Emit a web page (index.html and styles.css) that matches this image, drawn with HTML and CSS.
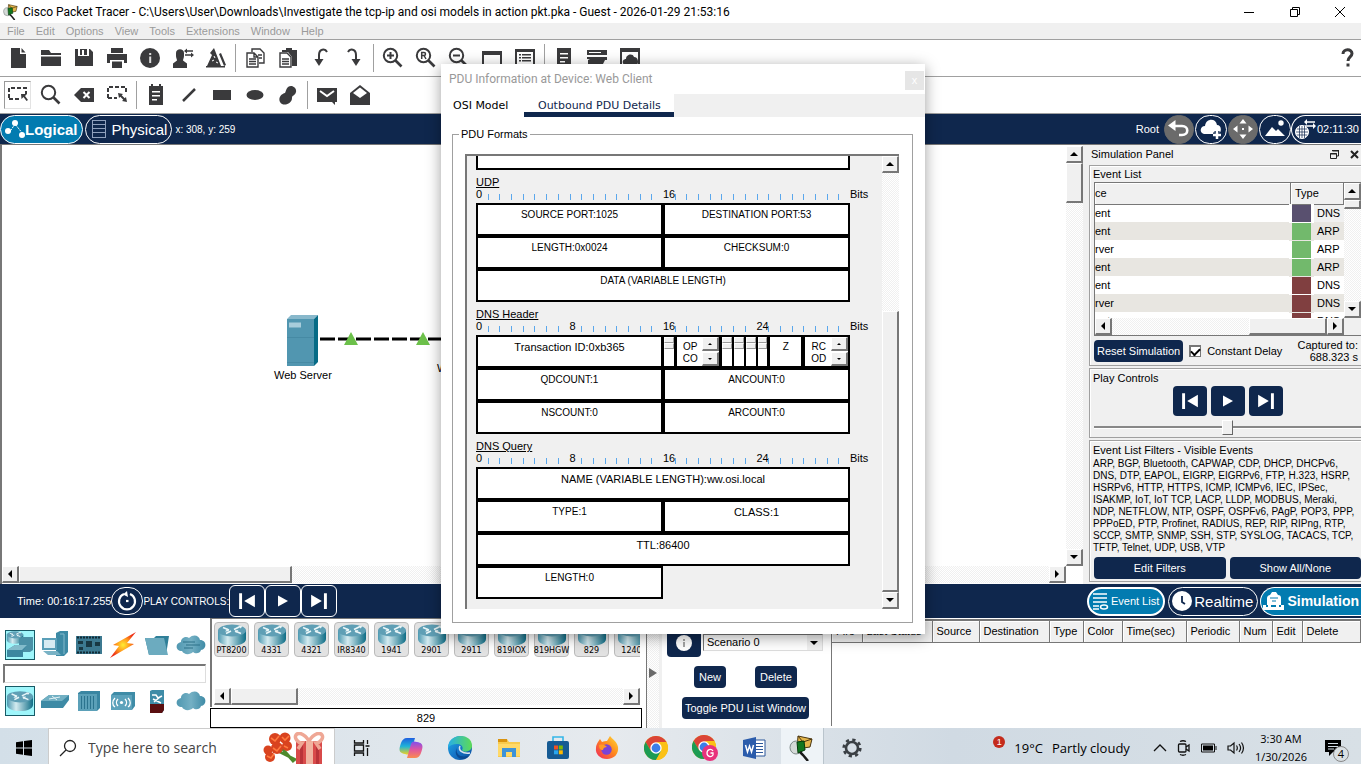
FILE: index.html
```html
<!DOCTYPE html>
<html lang="en">
<head>
<meta charset="utf-8">
<title>Cisco Packet Tracer</title>
<meta name="viewport" content="width=device-width, initial-scale=1">
<link rel="stylesheet" href="styles.css">
</head>
<body>
<svg class="defs" width="0" height="0" aria-hidden="true">
  <defs>
    <linearGradient id="teal" x1="0" x2="1" y1="0" y2="0"><stop offset="0" stop-color="#4b98b0"/><stop offset=".35" stop-color="#d4ebf0"/><stop offset="1" stop-color="#0f6d86"/></linearGradient>
    <linearGradient id="mist" x1="0" x2="1" y1="0" y2="0"><stop offset="0" stop-color="#4f97b0"/><stop offset=".5" stop-color="#74b0c4"/><stop offset="1" stop-color="#3f8ba6"/></linearGradient>
    <linearGradient id="cp1" x1="0" y1="0" x2="0" y2="1"><stop offset="0" stop-color="#1f5fe0"/><stop offset=".5" stop-color="#1fb3d8"/><stop offset="1" stop-color="#f2d21f"/></linearGradient>
    <linearGradient id="cp2" x1="0" y1="0" x2="0" y2="1"><stop offset="0" stop-color="#7d4ff0"/><stop offset=".5" stop-color="#e0569e"/><stop offset="1" stop-color="#fb8b4f"/></linearGradient>
    <linearGradient id="edge" x1="0" y1="0" x2="1" y2="1"><stop offset="0" stop-color="#1fb0e6"/><stop offset=".5" stop-color="#1676c9"/><stop offset="1" stop-color="#0c4f9c"/></linearGradient>
    <linearGradient id="edge2" x1="0" y1="0" x2="1" y2="0"><stop offset="0" stop-color="#27aee8"/><stop offset="1" stop-color="#5ddb55"/></linearGradient>
    <linearGradient id="fox" x1="1" y1="0" x2="0" y2="1"><stop offset="0" stop-color="#ffdf3b"/><stop offset=".45" stop-color="#ff8a1c"/><stop offset="1" stop-color="#f0235f"/></linearGradient>
    <radialGradient id="bolt"><stop offset="0" stop-color="#ffee33"/><stop offset=".5" stop-color="#ff9a1c"/><stop offset="1" stop-color="#ee3016"/></radialGradient>
    <symbol id="router" viewBox="0 0 30 22">
      <path d="M1 6v9c0 9 28 9 28 0V6z" fill="url(#teal)"/>
      <ellipse cx="15" cy="6.500" rx="14" ry="6" fill="#5f9fb5"/>
      <path d="M6 3.500l6 2.500M9 9.500l5-2.500M24 9.500l-6-2.500M17 5.500l6-3" stroke="#eaf6f8" stroke-width="1.600" fill="none"/>
      <path d="M12 7.200l-4 .2 2.800-3zM18 6.400l3.500-.3-2.500 3zM22 1.800l3.500.4-2 2.400z" fill="#eaf6f8"/>
    </symbol>
    <symbol id="cloud" viewBox="0 0 30 22"><path d="M6 17c-7 0-7-8-1-9 0-5 6-6 8-4 4-4 10-3 11 2 7 0 7 9 1 10-1 4-6 4-8 2-3 3-9 3-11-1z" fill="url(#mist)"/></symbol>
    <symbol id="prev" viewBox="0 0 16 16"><path d="M1 1h2.600v14H1zM15 2.500v11L5.500 8z" fill="#fff"/></symbol>
    <symbol id="play" viewBox="0 0 16 16"><path d="M3 2.500v11L13 8z" fill="#fff"/></symbol>
    <symbol id="next" viewBox="0 0 16 16"><path d="M12.400 1H15v14h-2.600zM1 2.500v11L10.500 8z" fill="#fff"/></symbol>
    <symbol id="lens" viewBox="0 0 22 22"><circle cx="8.500" cy="8.500" r="6.700" fill="none" stroke="#3a3a3c" stroke-width="2"/><path d="M13.500 13.500l6 6" stroke="#3a3a3c" stroke-width="2.600"/></symbol>
    <symbol id="ptlogo" viewBox="0 0 26 26">
      <path d="M9 1l14 3-2 8-13 2z" fill="#e3b54a" stroke="#4a3510"/><path d="M9 1l5 6 9-3" fill="none" stroke="#4a3510"/>
      <ellipse cx="7" cy="12.500" rx="6" ry="6.500" fill="#d5dad8" stroke="#7f8a88"/>
      <path d="M8 7l7-1 1 9-7 3z" fill="#12761f" stroke="#053b0a"/><path d="M11 17l3 3 5 6" stroke="#1a1a1a" stroke-width="2.500" fill="none"/>
    </symbol>
    <symbol id="chrome" viewBox="0 0 24 24"><circle cx="12" cy="12" r="12" fill="#e8b90f"/><path d="M1.600 6A12 12 0 0 1 22.400 6L12 12z" fill="#db4437"/><path d="M1.600 6h20.800L12 6.500 7 15z" fill="#db4437"/><path d="M1.600 6A12 12 0 0 0 12 24l5-9-5 2-5-2z" fill="#1c9b53"/><path d="M22.400 6A12 12 0 0 1 12 24l5.200-9L13 6z" fill="#fbc116"/><circle cx="12" cy="12" r="5.700" fill="#fff"/><circle cx="12" cy="12" r="4.400" fill="#3b7de8"/></symbol>
  </defs>
</svg>

<div class="app">
  <header class="titlebar">
    <svg class="logo" width="16" height="16"><use href="#ptlogo"/></svg>
    <h1>Cisco Packet Tracer - C:\Users\User\Downloads\Investigate the tcp-ip and osi models in action pkt.pka - Guest - 2026-01-29 21:53:16</h1>
    <div class="winbtns">
      <button aria-label="Minimize"><svg width="10" height="10"><path d="M0 5.500h10" stroke="#000"/></svg></button>
      <button aria-label="Restore"><svg width="10" height="10" fill="none" stroke="#000"><path d="M.5 2.500h7v7h-7zM2.500 2.500v-2h7v7h-2"/></svg></button>
      <button aria-label="Close"><svg width="10" height="10"><path d="M0 0l10 10M10 0L0 10" stroke="#000"/></svg></button>
    </div>
  </header>

  <nav class="menubar">
    <button>File</button><button>Edit</button><button>Options</button><button>View</button><button>Tools</button><button>Extensions</button><button>Window</button><button>Help</button>
  </nav>

  <div class="toolbar">
    <button aria-label="New"><svg width="22" height="22"><path d="M4 1h9v6h6v14H4zM14.500 1l4 4.500h-4z"/></svg></button>
    <button aria-label="Open"><svg width="22" height="22"><path d="M1 3h8l2 3h10v2H1zM1 9.500h20V19H1z"/></svg></button>
    <button aria-label="Save"><svg width="22" height="22"><path d="M2 2h3v7h11V2h1l3 3v14H2zM7 2h7v6h-3V3H9v5H7z"/></svg></button>
    <button aria-label="Print"><svg width="22" height="22"><path d="M5 1h12v5H5zM1 7h20v9h-3v-3H4v3H1zM6 14.500h10V21H6z"/></svg></button>
    <button aria-label="Activity information"><svg width="22" height="22"><circle cx="11" cy="11" r="10"/><path d="M10.200 6h2v2h-2zM10.200 9.500h2V16h-2z" fill="#ddd"/></svg></button>
    <button aria-label="User profile"><svg width="22" height="22"><path d="M4 6c0-5 8-5 8 0v3c0 2-1 3-1 4.500l4 3V21H1v-4.500l4-3C5 12 4 11 4 9z"/><path d="M13 4h8M13 8h8" stroke="#3a3a3c" stroke-width="1.500"/><path d="M15 1.500v5L12 4zM19 5.500v5l3-2.500z"/></svg></button>
    <button aria-label="Activity wizard"><svg width="22" height="22"><path d="M9 1l7 18H2L7 8 5 6zM14 7l2-1 5 12-2 1zM1 19h19v1.500H1z"/><path d="M9 9l1 2M7 14l2-1M11 15l2 1" stroke="#fff"/></svg></button>
    <span class="sep"></span>
    <button aria-label="Copy"><svg width="22" height="22" fill="none" stroke="#3a3a3c" stroke-width="1.400"><path d="M8 5V2h8l4 4v10h-5M3 6h7l4 4v10H3zM10 6v4h4M5 12h7M5 14.500h7M5 17h7M14 8h4M15 11h3"/></svg></button>
    <button aria-label="Paste"><svg width="22" height="22"><path d="M5 3h4V1h6v2h5v16h-5v-9l-4-5H5z"/><path d="M3 6h7l4 4v10H3zM5 12h7M5 14.500h7M5 17h7" fill="#fff" stroke="#3a3a3c" stroke-width="1.400"/></svg></button>
    <button aria-label="Undo"><svg width="22" height="22"><path d="M17 5c-2-4-8-3-8 3v7" fill="none" stroke="#3a3a3c" stroke-width="2"/><path d="M4.500 12h9L9 19z"/></svg></button>
    <button aria-label="Redo"><svg width="22" height="22"><path d="M5 5c2-4 8-3 8 3v7" fill="none" stroke="#3a3a3c" stroke-width="2"/><path d="M8.500 12h9L13 19z"/></svg></button>
    <span class="sep"></span>
    <button aria-label="Zoom in"><svg width="22" height="22"><use href="#lens"/><path d="M5 8.500h7M8.500 5v7" stroke="#3a3a3c" stroke-width="2"/></svg></button>
    <button aria-label="Zoom reset"><svg width="22" height="22"><use href="#lens"/><path d="M6.700 12V5.500H9c2 0 2 3 0 3H7M9 8.500l2 3.500" fill="none" stroke="#3a3a3c" stroke-width="1.500"/></svg></button>
    <button aria-label="Zoom out"><svg width="22" height="22"><use href="#lens"/><path d="M5 8.500h7" stroke="#3a3a3c" stroke-width="2"/></svg></button>
    <button aria-label="Drawing palette"><svg width="22" height="22"><path d="M1 4h20v16H1zM3 8v10h16V8z" fill-rule="evenodd"/></svg></button>
    <button aria-label="Custom devices"><svg width="22" height="22"><path d="M1 2h20v17H1zM3 5v12h16V5zM5 7h2v1.500H5zM8 7h9v1.500H8zM5 10h2v1.500H5zM8 10h9v1.500H8zM5 13h2v1.500H5zM8 13h9v1.500H8z" fill-rule="evenodd"/></svg></button>
    <span class="sep"></span>
    <button aria-label="Cluster"><svg width="22" height="22"><path d="M4 1h14v20H4zM7 6h8v1.500H7zM7 10h8v1.500H7zM7 14h5v1.500H7z" fill-rule="evenodd"/></svg></button>
    <button aria-label="Servers"><svg width="22" height="22"><path d="M1 3h20v5H1zM3 5v1h12V5zM1 10h20v3h-2l-2 4H2v-4l2-1H1z" fill-rule="evenodd"/></svg></button>
    <button aria-label="Cloud view"><svg width="22" height="22"><path d="M1 1h20v20H1zM3 5v13h16V5z" fill-rule="evenodd"/><path d="M5 18c-3-4 0-6 2-6 0-5 7-6 8-2 4 0 5 5 3 8z"/></svg></button>
    <button class="help" aria-label="Help"><svg width="22" height="22"><path d="M7 7c0-5.500 9-5.500 9-.5 0 3.500-4 3.500-4 7.500" fill="none" stroke="#3a3a3c" stroke-width="3"/><path d="M10.500 16.500h3v3h-3z"/></svg></button>
  </div>

  <div class="toolbar">
    <button class="pressed" aria-label="Select"><svg width="22" height="22"><path d="M2 14V4h17v6M2 15h11" fill="none" stroke="#3a3a3c" stroke-width="2" stroke-dasharray="4 2"/><path d="M14 10h6l-2 2 3 4-1.500 1-3-4-2 2z"/></svg></button>
    <button aria-label="Inspect"><svg width="22" height="22"><use href="#lens"/></svg></button>
    <button aria-label="Delete"><svg width="22" height="22"><path d="M1 11l7-7h13v14H8z"/><path d="M10.500 8l6 6M16.500 8l-6 6" stroke="#fff" stroke-width="2"/></svg></button>
    <button aria-label="Resize"><svg width="22" height="22"><path d="M2 14V3h18v7M2 14h9" fill="none" stroke="#3a3a3c" stroke-width="2" stroke-dasharray="4 2"/><path d="M12 9l5 1-1.300 1.300 3 3L20 13l1 5-5-1 1.300-1.300-3-3L13 14z"/></svg></button>
    <span class="sep"></span>
    <button aria-label="Place note"><svg width="22" height="22"><path d="M4 2h2V0h2v2h6V0h2v2h2v19H4zM7 7h8v1.500H7zM7 11h8v1.500H7zM7 15h5v1.500H7z" fill-rule="evenodd"/></svg></button>
    <button aria-label="Draw line"><svg width="22" height="22"><path d="M5 17L17 5" stroke="#3a3a3c" stroke-width="2.500"/></svg></button>
    <button aria-label="Draw rectangle"><svg width="22" height="22"><path d="M2 6h18v10H2z"/></svg></button>
    <button aria-label="Draw ellipse"><svg width="22" height="22"><ellipse cx="11" cy="11" rx="8.500" ry="5"/></svg></button>
    <button aria-label="Draw freeform"><svg width="22" height="22"><path d="M11 3c4-3 9 1 8 5-1 4-4 3-4 6 0 6-9 9-12 4-2-4 1-8 5-9 1-2 1-4 3-6z"/></svg></button>
    <span class="sep"></span>
    <button aria-label="Add simple PDU"><svg width="22" height="22"><path d="M1 4h20v14h-2v3l-3-3H1z"/><path d="M4 7l7 5 7-5" fill="none" stroke="#fff" stroke-width="2"/></svg></button>
    <button aria-label="Add complex PDU"><svg width="22" height="22"><path d="M1 9l10-8 10 8v12H1z"/><path d="M4 9l7-5.500L18 9l-7 5z" fill="#fff"/></svg></button>
  </div>

  <div class="modebar">
    <button class="pill on"><svg width="21" height="20"><path d="M5 14l6-9 8 10" stroke="#fff" stroke-dasharray="2 1" fill="none"/><circle cx="4" cy="12" r="3" fill="#fff"/><circle cx="11" cy="4" r="3" fill="#fff"/><circle cx="18" cy="16" r="3" fill="#fff"/></svg>Logical</button>
    <button class="pill"><svg width="17" height="20" fill="none" stroke="#8fa0bd"><path d="M2.500 1v18M15.500 1v18M2 1.500h14M2 5.500h14M2 9.500h14M2 13.500h14M2 18.500h14"/></svg>Physical</button>
    <span class="coords">x: 308, y: 259</span>
    <span class="root">Root</span>
    <button class="round gray" aria-label="Back"><svg width="24" height="24"><path d="M6 9h9c7 0 7 9 0 9h-3" fill="none" stroke="#fff" stroke-width="2.600"/><path d="M8.500 3v11L1 8.500z" fill="#fff"/></svg></button>
    <button class="round" aria-label="New cluster"><svg width="24" height="24" fill="#fff"><path d="M5 17c-5-1-4-8 1-8 1-8 11-8 12-1 5 0 5 8 1 9z"/><path d="M14 18h8M18 14v8" stroke="#0f274d" stroke-width="5"/><path d="M14 18h8M18 14v8" stroke="#fff" stroke-width="2.500"/></svg></button>
    <button class="round gray" aria-label="Move object"><svg width="24" height="24" fill="#fff"><path d="M12 2l3.500 4.500h-7zM12 22l3.500-4.500h-7zM2 12l4.500-3.500v7zM22 12l-4.500-3.500v7zM11 11h2v2h-2z"/></svg></button>
    <button class="round" aria-label="Set background"><svg width="24" height="24" fill="#fff"><path d="M2 19l7-9 4 4 2-2 7 7z"/><circle cx="18" cy="6" r="2.700"/></svg></button>
    <button class="pill env" aria-label="Environment, 02:11:30"><svg width="23" height="24" fill="none" stroke="#fff"><circle cx="9" cy="15" r="6.500" fill="#fff"/><path d="M3 15h12M9 9v12M4 12h10M4 18h10M6.500 9v12M11.500 9v12" stroke="#0f274d" stroke-width=".7"/><path d="M12 5h10M12 9h9" stroke-width="1.600"/><path d="M14 2l-3 3 3 3zM20 6l3 3-3 3z" fill="#fff" stroke="none"/></svg>02:11:30</button>
  </div>

  <main class="workspace">
    <section class="canvaswrap" aria-label="Logical workspace">
      <div class="canvas">
        <svg class="link" width="200" height="20"><path d="M0 9h200" stroke="#000" stroke-width="3" stroke-dasharray="15 3"/><path d="M31 2l7 13H24zM103 2l7 13H96z" fill="#6cc04a"/></svg>
        <figure class="node server"><svg width="32" height="52"><path d="M0 4l4-4h27l-4 4z" fill="#88b8cb"/><path d="M27 4l4-4v47l-4 4z" fill="#066b86"/><path d="M0 4h27v47H0z" fill="#5196b0"/><path d="M2 7.500h12v5H2z" fill="#a8cddb"/><path d="M0 22.500h27M0 47.500h27" stroke="#468aa4"/></svg><figcaption>Web Server</figcaption></figure>
        <figure class="node client"><figcaption>Web Client</figcaption></figure>
      </div>
      <div class="vscroll"><button class="sb up" aria-label="Scroll up"></button><i class="thumb t40"></i><span class="grow"></span><button class="sb down" aria-label="Scroll down"></button></div>
      <div class="hscroll"><button class="sb left" aria-label="Scroll left"></button><i class="thumb t273"></i><span class="grow"></span><button class="sb right" aria-label="Scroll right"></button></div>
    </section>

    <aside class="sim">
      <div class="simhead"><h2>Simulation Panel</h2>
        <button aria-label="Float"><svg width="9" height="9" fill="none" stroke="#222"><path d="M2.500 1h6v5h-2M2 .5h7M.5 3.500h6v5h-6zM0 4h7"/></svg></button>
        <button aria-label="Close panel"><svg width="9" height="9"><path d="M1 1l7 7M8 1L1 8" stroke="#222" stroke-width="2"/></svg></button>
      </div>
      <section class="group evgroup">
        <h3>Event List</h3>
        <div class="events">
          <div class="evscroll">
            <table>
              <colgroup><col><col class="w22"><col class="w31"></colgroup>
              <thead><tr><th>ce</th><th colspan="2">Type</th></tr></thead>
              <tbody>
                <tr><td>ent</td><td class="c p"></td><td class="hl">DNS</td></tr>
                <tr><td>ent</td><td class="c g"></td><td>ARP</td></tr>
                <tr><td>rver</td><td class="c g"></td><td>ARP</td></tr>
                <tr><td>ent</td><td class="c g"></td><td>ARP</td></tr>
                <tr><td>ent</td><td class="c r"></td><td>DNS</td></tr>
                <tr><td>rver</td><td class="c r"></td><td>DNS</td></tr>
                <tr><td>ent</td><td class="c r"></td><td>DNS</td></tr>
              </tbody>
            </table>
          </div>
          <div class="vscroll"><button class="sb up" aria-label="Scroll up"></button><i class="thumb t9"></i><span class="grow"></span><button class="sb down" aria-label="Scroll down"></button></div>
          <div class="hscroll"><button class="sb left" aria-label="Scroll left"></button><span class="grow"></span><i class="thumb t78"></i><button class="sb right" aria-label="Scroll right"></button></div>
        </div>
        <div class="reset"><button class="btn tight">Reset Simulation</button><label><input type="checkbox" checked>Constant Delay</label><p>Captured to:<br>688.323 s</p></div>
      </section>
      <section class="group">
        <h3>Play Controls</h3>
        <div class="playrow">
          <button class="btn sq" aria-label="Step back"><svg width="18" height="18"><use href="#prev"/></svg></button>
          <button class="btn sq" aria-label="Play"><svg width="16" height="16"><use href="#play"/></svg></button>
          <button class="btn sq" aria-label="Step forward"><svg width="18" height="18"><use href="#next"/></svg></button>
        </div>
        <input class="slider" type="range" aria-label="Play speed" min="0" max="100" value="50">
      </section>
      <section class="group last">
        <h3>Event List Filters - Visible Events</h3>
        <p class="filters">ARP, BGP, Bluetooth, CAPWAP, CDP, DHCP, DHCPv6,<br>DNS, DTP, EAPOL, EIGRP, EIGRPv6, FTP, H.323, HSRP,<br>HSRPv6, HTTP, HTTPS, ICMP, ICMPv6, IEC, IPSec,<br>ISAKMP, IoT, IoT TCP, LACP, LLDP, MODBUS, Meraki,<br>NDP, NETFLOW, NTP, OSPF, OSPFv6, PAgP, POP3, PPP,<br>PPPoED, PTP, Profinet, RADIUS, REP, RIP, RIPng, RTP,<br>SCCP, SMTP, SNMP, SSH, STP, SYSLOG, TACACS, TCP,<br>TFTP, Telnet, UDP, USB, VTP</p>
        <div class="two"><button class="btn">Edit Filters</button><button class="btn">Show All/None</button></div>
      </section>
    </aside>
  </main>

  <div class="timebar">
    <span class="time">Time: 00:16:17.255</span>
    <button class="round cyc" aria-label="Power cycle devices"><svg width="22" height="22" fill="none" stroke="#fff" stroke-width="2.200"><path d="M8 4a8 8 0 1 0 6 0"/><path d="M11 1L7 4.500l5 2.500z" fill="#fff" stroke="none"/><path d="M10 11h2.500"/></svg></button>
    <span class="pclabel">PLAY CONTROLS:</span>
    <button class="pc" aria-label="Back"><svg width="18" height="18"><use href="#prev"/></svg></button>
    <button class="pc" aria-label="Play"><svg width="16" height="16"><use href="#play"/></svg></button>
    <button class="pc" aria-label="Forward"><svg width="18" height="18"><use href="#next"/></svg></button>
    <span class="grow"></span>
    <button class="pill on small"><svg width="17" height="18" stroke="#fff" fill="none" stroke-width="1.500"><path d="M1 2h14M1 6h14M1 10h14M1 14h6M1 17h6"/><ellipse cx="12" cy="15" rx="3.500" ry="2"/></svg>Event List</button>
    <button class="pill real"><svg width="22" height="22"><circle cx="11" cy="11" r="10" fill="#fff"/><path d="M11 6v6l3 2" stroke="#0f274d" stroke-width="1.800" fill="none"/></svg>Realtime</button>
    <button class="pill on simu"><svg width="22" height="20" fill="#fff"><path d="M4 14V7c0-2 2-3 3-3l2-3h4l2 3c2 0 3 1 3 3v7zM0 14h3v2h2v-2h3v2h5v-2h3v2h2v-2h3v5H0z"/><path d="M7 7h8M9 10h4" stroke="#027bb0"/></svg>Simulation</button>
  </div>

  <div class="bottom">
    <section class="kinds" aria-label="Device types">
      <div class="kindrow">
        <button class="sel" aria-label="Network devices"><svg width="30" height="30"><use href="#router" x="1" y="1" width="18" height="13"/><path d="M14 9l3-2h11v13l-3 2H14z" fill="#4a90a6"/><path d="M2 20l8-5h12l-4 6v6H2z" fill="#3c87a0"/><path d="M2 20l8-5h12l-5 5z" fill="#83bccb"/></svg></button>
        <button aria-label="End devices"><svg width="30" height="30"><path d="M16 3l4-2h8v21l-4 4h-8z" fill="#3d8aa5"/><path d="M20 4h4v20" stroke="#83b9cc" fill="none"/><path d="M2 8h15v12H2z" fill="#5a9fb8"/><path d="M4 10h11v8H4z" fill="#d7ebf2"/><path d="M3 21h14l4 4H8z" fill="#79b2c5"/></svg></button>
        <button aria-label="Components"><svg width="30" height="30"><path d="M2 6h26v18H2z" fill="#3c7990"/><path d="M3 7.500h24M3 22.500h24" stroke="#122b36" stroke-width="2" stroke-dasharray="2 1"/><path d="M12 11h6v6h-6zM4 11h5v3H4zM21 12h5v4h-5zM5 17h4v3H5z" fill="#183843"/></svg></button>
        <button aria-label="Connections"><svg width="30" height="30"><path d="M28 2L19 13l7 1L2 28l9-12-6-1z" fill="url(#bolt)"/></svg></button>
        <button aria-label="Miscellaneous"><svg width="30" height="30"><path d="M3 8h9l2-2h13l-3 19H7z" fill="#2f7f98"/><path d="M3 8h19l4 17H7z" fill="#6cabbf"/></svg></button>
        <button aria-label="Multiuser connection"><svg width="30" height="22"><use href="#cloud"/><path d="M7 8h12M10 11h14M8 14h9" stroke="#2c7088"/></svg></button>
      </div>
      <input class="find" type="text" aria-label="Search devices">
      <div class="kindrow">
        <button class="sel" aria-label="Routers"><svg width="28" height="22"><use href="#router"/></svg></button>
        <button aria-label="Switches"><svg width="30" height="20"><path d="M1 10l8-6h20v5l-6 8H1z" fill="#3d8aa5"/><path d="M1 10l8-6h20l-7 6z" fill="#72b0c3"/><path d="M9 8l11-2M12 5l5 4" stroke="#e2f1f5"/></svg></button>
        <button aria-label="Hubs"><svg width="24" height="22"><path d="M1 3l3-2h19v17l-3 3H1z" fill="#3a86a2"/><path d="M1 4h19v17H1z" fill="#5ba0b8"/><path d="M4.500 6v13M7.500 6v13M10.500 6v13M13.500 6v13M16.500 6v13" stroke="#2b738e"/></svg></button>
        <button aria-label="Wireless devices"><svg width="26" height="20"><path d="M1 4l3-3h21v14l-3 4H1z" fill="#3f8ca7"/><path d="M1 4h21v15H1z" fill="#5ca2bb"/><path d="M8 8c-2 2-2 5 0 7M5 7c-3 3-3 7 0 9M15 8c2 2 2 5 0 7M18 7c3 3 3 7 0 9" stroke="#fff" fill="none" stroke-width="1.300"/><circle cx="11.500" cy="11.500" r="1.600" fill="#fff"/></svg></button>
        <button aria-label="Security"><svg width="16" height="24"><path d="M1 2l2-1h12v20l-2 3H1z" fill="#3f8ca7"/><path d="M1 15h14v6l-2 3H1z" fill="#5a0f10"/><path d="M3 6h4l2 3 4-2M4 10l8 4M5 13l6-5" stroke="#fff" stroke-width="1.500" fill="none"/></svg></button>
        <button aria-label="WAN emulation"><svg width="30" height="22"><use href="#cloud"/></svg></button>
      </div>
    </section>
    <section class="models" aria-label="Device models">
      <div class="shelf">
        <div class="devs">
          <button><svg width="30" height="22"><use href="#router"/></svg>PT8200</button>
          <button><svg width="30" height="22"><use href="#router"/></svg>4331</button>
          <button><svg width="30" height="22"><use href="#router"/></svg>4321</button>
          <button><svg width="30" height="22"><use href="#router"/></svg>IR8340</button>
          <button><svg width="30" height="22"><use href="#router"/></svg>1941</button>
          <button><svg width="30" height="22"><use href="#router"/></svg>2901</button>
          <button><svg width="30" height="22"><use href="#router"/></svg>2911</button>
          <button><svg width="30" height="22"><use href="#router"/></svg>819IOX</button>
          <button><svg width="30" height="22"><use href="#router"/></svg>819HGW</button>
          <button><svg width="30" height="22"><use href="#router"/></svg>829</button>
          <button><svg width="30" height="22"><use href="#router"/></svg>1240</button>
        </div>
        <div class="hscroll"><button class="sb left" aria-label="Scroll left"></button><i class="thumb t67"></i><span class="grow"></span><button class="sb right" aria-label="Scroll right"></button></div>
      </div>
      <p class="picked">829</p>
    </section>
    <button class="sash" aria-label="Collapse"><svg width="9" height="10"><path d="M0 0l8 5-8 5z" fill="#6a6a6a"/></svg></button>
    <section class="scen">
      <div class="scenrow"><button class="btn info" aria-label="Scenario info"><svg width="18" height="18"><circle cx="9" cy="9" r="8" fill="#fff"/><path d="M9 5v2M9 8v5" stroke="#888" stroke-width="1.500"/></svg></button>
        <span class="combo"><select aria-label="Scenario"><option>Scenario 0</option></select></span></div>
      <div class="scenrow mid"><button class="btn">New</button><button class="btn">Delete</button></div>
      <div class="scenrow end"><button class="btn tight">Toggle PDU List Window</button></div>
    </section>
    <div class="pdus">
      <table><thead><tr><th class="w30">Fire</th><th class="w70">Last Status</th><th class="w47">Source</th><th class="w70">Destination</th><th class="w34">Type</th><th class="w39">Color</th><th class="w64">Time(sec)</th><th class="w53">Periodic</th><th class="w33">Num</th><th class="w30">Edit</th><th>Delete</th></tr></thead></table>
    </div>
  </div>

  <footer class="taskbar">
    <button class="start" aria-label="Start"><svg width="16" height="16"><path d="M0 2.200l7-1v6.300H0zM8 1l8-1v7.500H8zM0 8.500h7v6.300l-7-1zM8 8.500h8V16l-8-1z"/></svg></button>
    <label class="search"><svg width="18" height="18" fill="none" stroke="#222" stroke-width="1.300"><circle cx="11" cy="7" r="5.500"/><path d="M7 11l-6 6"/></svg>
      <input type="text" placeholder="Type here to search" aria-label="Type here to search">
      <svg class="gift" width="64" height="32"><path d="M18 14l14 16M14 18l20 10" stroke="#4d8a2c" stroke-width="3"/><g fill="#d9431f"><circle cx="13" cy="7" r="6"/><circle cx="23" cy="6" r="5.500"/><circle cx="25" cy="14" r="5"/><circle cx="15" cy="16" r="6"/><circle cx="6" cy="18" r="4.500"/><circle cx="8" cy="25" r="5"/></g><path d="M9 6l4 3 4-5M20 5l3 3 4-4M11 16l4 3 4-5M5 24l4 2 3-4M22 14l4 2" stroke="#ff7a3f" stroke-width="1.600" fill="none"/><path d="M34 9h26v23H34z" fill="#d84a4a"/><path d="M38 11h3v21h-3zM54 11h3v21h-3z" fill="#b93339"/><path d="M44 9h7v23h-7z" fill="#f0b3a0"/><path d="M47 9c-5-8-11-9-13-6s2 8 6 8l-4 6M47 9c5-8 11-9 13-6s-2 8-6 8l4 6" fill="none" stroke="#efa795" stroke-width="3.500"/></svg></label>
    <div class="apps">
      <button aria-label="Task view"><svg width="18" height="18" fill="none" stroke="#111" stroke-width="1.300"><path d="M1.500 1v3h9V1M1.500 17v-3h9v3M1.500 6h9v6h-9zM14.500 1v4M14.500 9v8M12.500 7h4"/></svg></button>
      <button aria-label="Copilot"><svg width="24" height="24"><path d="M8 2h8l-4 14c-1 3-3 3-6 2-7-1-6-5-4-11 1-3 3-5 6-5z" fill="url(#cp1)"/><path d="M16 22H8l4-14c1-3 3-3 6-2 7 1 6 5 4 11-1 3-3 5-6 5z" fill="url(#cp2)"/></svg></button>
      <button aria-label="Edge"><svg width="24" height="24"><circle cx="12" cy="12" r="12" fill="url(#edge)"/><path d="M0 12C0-3 24-4 24 10c0 6-9 7-10 4 2-3-1-6-5-6-4 0-7 1-9 4z" fill="url(#edge2)"/><path d="M9 12c-2 6 4 11 13 7l-3 3C11 26 5 18 9 12z" fill="#0b4b93"/><path d="M12 10c-2 4 2 8 10 7" stroke="#dce7ee" stroke-width="1.500" fill="none"/></svg></button>
      <button aria-label="File Explorer"><svg width="24" height="22"><path d="M1 2h9l2 3h11v15H1z" fill="#f7ca4d"/><path d="M1 2h9v3H1z" fill="#d9930f"/><path d="M1 7h22v12H1z" fill="#ffd968"/><path d="M5 20v-9h14v9h-4v-5H9v5z" fill="#3e93d8"/></svg></button>
      <button aria-label="Microsoft Store"><svg width="24" height="24"><path d="M7 6V1h10v5" fill="none" stroke="#35b6e8" stroke-width="1.600"/><rect x="1" y="5" width="22" height="18" rx="2" fill="#155a93"/><path d="M8 9.500h4v4H8z" fill="#f25022"/><path d="M12.800 9.500h4v4h-4z" fill="#7fba00"/><path d="M8 14.300h4v4H8z" fill="#29a6ee"/><path d="M12.800 14.300h4v4h-4z" fill="#ffb900"/></svg></button>
      <button aria-label="Firefox"><svg width="24" height="24"><path d="M3 6l2-3 2 3c2-1 4-1 5-1l3-5c2 3 7 5 8 11 1 7-4 12-11 12S0 18 1 12c0-3 1-4 2-6z" fill="url(#fox)"/><circle cx="11.500" cy="13.500" r="5.200" fill="#7a42d6"/><path d="M4 9c4-1 6 0 8 2-2 0-4 1-4 3-3 0-4-2-4-5z" fill="#ff9a26"/></svg></button>
      <button aria-label="Chrome"><svg width="24" height="24"><use href="#chrome"/></svg></button>
      <button aria-label="Chrome profile G"><svg width="26" height="26"><use href="#chrome" width="24" height="24"/><circle cx="18" cy="18" r="8" fill="#e8327c"/><path d="M21 16c-2-3-6-1.500-6 2s4 5 6 2v-2h-2.500" fill="none" stroke="#fff" stroke-width="1.300"/></svg></button>
      <button aria-label="Word"><svg width="24" height="22"><path d="M12 3h11v16H12z" fill="#fff" stroke="#2b579a"/><path d="M14 6.500h7M14 9.500h7M14 12.500h7M14 15.500h7" stroke="#2b579a"/><path d="M1 3l13-3v22L1 19z" fill="#2b5cab"/><path d="M3.500 8l2 7 2-6 2 6 2-7" stroke="#fff" stroke-width="1.500" fill="none"/></svg></button>
      <button class="active" aria-label="Cisco Packet Tracer"><svg width="26" height="26"><use href="#ptlogo"/></svg></button>
      <button aria-label="Settings"><svg width="20" height="20" fill="none" stroke="#3a3f44"><circle cx="10" cy="10" r="6" stroke-width="2.600"/><circle cx="10" cy="10" r="8.300" stroke-width="2.600" stroke-dasharray="3.260 3.260"/></svg></button>
    </div>
    <div class="tray">
      <button class="weather"><b class="badge">1</b><span>19°C</span><span>Partly cloudy</span></button>
      <button aria-label="Show hidden icons"><svg width="14" height="8"><path d="M1 7l6-6 6 6" fill="none" stroke="#111" stroke-width="1.300"/></svg></button>
      <button aria-label="Meet now"><svg width="14" height="16" fill="none" stroke="#111" stroke-width="1.300"><rect x="1.500" y="4" width="7.500" height="8" rx="1"/><path d="M9 7l3-2v6L9 9M3 1.500c2-1 4-1 6 0M3 14.500c2 1 4 1 6 0"/></svg></button>
      <button aria-label="Battery"><svg width="16" height="10"><path d="M.5 1h13v8H.5zM15 3v4" fill="none" stroke="#111"/><path d="M2 2.500h10v5H2z"/></svg></button>
      <button aria-label="Volume"><svg width="18" height="14" fill="none" stroke="#111" stroke-width="1.200"><path d="M1 5h2.500L7 2v10L3.500 9H1zM9.500 4.500c1 1.500 1 3.500 0 5M12 3c2 2.500 2 5.500 0 8M14.500 1.500c2.500 3.500 2.500 7.500 0 11"/></svg></button>
      <time>3:30 AM<br>1/30/2026</time>
      <button class="note" aria-label="4 notifications"><svg width="16" height="16"><path d="M0 0h16v12h-8l-4 4v-4H0z"/><path d="M3 3.500h10M3 6.500h10M3 9h6" stroke="#d3dce4"/></svg><b>4</b></button>
    </div>
  </footer>
</div>

<div class="dialog" role="dialog" aria-label="PDU Information at Device: Web Client">
  <div class="dtitle"><h2>PDU Information at Device: Web Client</h2><button aria-label="Close">x</button></div>
  <div class="tabs"><button>OSI Model</button><button class="cur">Outbound PDU Details</button></div>
  <fieldset>
    <legend>PDU Formats</legend>
    <div class="pduview">
      <div class="fields">
        <div class="cut"></div>
        <h3>UDP</h3>
        <div class="ruler"><b>0</b><i></i><i></i><i></i><i></i><i></i><i></i><i></i><i></i><i></i><i></i><i></i><i></i><i></i><i></i><i></i><b>16</b><i></i><i></i><i></i><i></i><i></i><i></i><i></i><i></i><i></i><i></i><i></i><i></i><i></i><i></i><i></i><b>Bits</b></div>
        <div class="bits"><div class="s16">SOURCE PORT:1025</div><div class="s16">DESTINATION PORT:53</div><div class="s16">LENGTH:0x0024</div><div class="s16">CHECKSUM:0</div><div class="s32">DATA (VARIABLE LENGTH)</div></div>
        <h3>DNS Header</h3>
        <div class="ruler"><b>0</b><i></i><i></i><i></i><i></i><i></i><i></i><i></i><b>8</b><i></i><i></i><i></i><i></i><i></i><i></i><i></i><b>16</b><i></i><i></i><i></i><i></i><i></i><i></i><i></i><b>24</b><i></i><i></i><i></i><i></i><i></i><i></i><i></i><b>Bits</b></div>
        <div class="bits"><div class="s16 mixed">Transaction ID:0xb365</div><div class="s1"><i></i><i></i></div><div class="s4"><span>OP<br>CO</span><span class="mini"><button class="sb up" aria-label="Up"></button><button class="sb down" aria-label="Down"></button></span></div><div class="s1"><i></i><i></i></div><div class="s1"><i></i><i></i></div><div class="s1"><i></i><i></i></div><div class="s1"><i></i><i></i></div><div class="s3">Z</div><div class="s4"><span>RC<br>OD</span><span class="mini"><button class="sb up" aria-label="Up"></button><button class="sb down" aria-label="Down"></button></span></div><div class="s16">QDCOUNT:1</div><div class="s16">ANCOUNT:0</div><div class="s16">NSCOUNT:0</div><div class="s16">ARCOUNT:0</div></div>
        <h3>DNS Query</h3>
        <div class="ruler"><b>0</b><i></i><i></i><i></i><i></i><i></i><i></i><i></i><b>8</b><i></i><i></i><i></i><i></i><i></i><i></i><i></i><b>16</b><i></i><i></i><i></i><i></i><i></i><i></i><i></i><b>24</b><i></i><i></i><i></i><i></i><i></i><i></i><i></i><b>Bits</b></div>
        <div class="bits"><div class="s32 mixed">NAME (VARIABLE LENGTH):ww.osi.local</div><div class="s16">TYPE:1</div><div class="s16 mixed">CLASS:1</div><div class="s32 mixed">TTL:86400</div><div class="s16">LENGTH:0</div></div>
      </div>
      <div class="vscroll"><button class="sb up" aria-label="Scroll up"></button><span class="grow"></span><i class="thumb t281"></i><button class="sb down" aria-label="Scroll down"></button></div>
    </div>
  </fieldset>
</div>
</body>
</html>
```

FILE: styles.css
```css
:root {
  --navy: #0f274d;
  --blue: #027bb0;
  --face: #f0f0f0;
  --ink: #3a3a3c;
  --ui: "Liberation Sans", Arial, sans-serif;
  --segoe: "Open Sans", "Noto Sans", sans-serif;
  --caption: Roboto, "Open Sans", sans-serif;
}
* { box-sizing: border-box; }
body { margin: 0; font: 11px/13px var(--ui); color: #000; background: #fff; overflow: hidden; }
h1, h2, h3, p, figure { margin: 0; font: inherit; }
button, input, select { font: inherit; color: inherit; }
button { border: 0; padding: 0; background: none; display: flex; align-items: center; justify-content: center; flex: none; white-space: nowrap; }
svg { display: block; flex: none; }
table { border-collapse: collapse; border-spacing: 0; }
.defs { position: absolute; }
.grow { flex: 1; }
.app { display: flex; flex-direction: column; min-height: 100vh; }

/* window chrome */
.titlebar { display: flex; align-items: center; height: 23px; padding-left: 3px; }
.titlebar h1 { font: 12px/16px var(--caption); margin-left: 4px; white-space: nowrap; }
.winbtns { display: flex; margin-left: auto; }
.winbtns button { width: 46px; height: 20px; }
.winbtns button:last-child { width: 43px; }
.menubar { display: flex; gap: 11px; height: 17px; padding-left: 7px; background: var(--face); border-bottom: 1px solid #a0a0a0; color: #9b9b9b; }
.toolbar { display: flex; align-items: center; height: 37px; padding-left: 1px; border-bottom: 1px solid #a0a0a0; }
.toolbar button { width: 33px; height: 28px; }
.toolbar svg:not([fill]) { fill: var(--ink); }
.toolbar .pressed { width: 27px; margin: 0 3px; border: 1px solid #999; border-right-color: #e3e3e3; border-bottom-color: #e3e3e3; }
.toolbar .help { margin-left: auto; width: 29px; }
.sep { width: 6px; height: 28px; background: linear-gradient(#a0a0a0, #a0a0a0) 3px 0 / 1px 100% no-repeat; }

.modebar, .timebar { display: flex; align-items: center; background: var(--navy); color: #fff; }
.modebar { height: 30px; }
.pill { height: 29px; border: 1px solid #fff; border-radius: 15px; padding: 0 5px; gap: 3px; font-size: 15px; background: var(--navy); color: #fff; }
.pill.on { background: var(--blue); font-weight: bold; }
.modebar .pill:first-child { padding: 0 4px 0 3px; margin-right: 2px; gap: 0; }
.modebar .pill:nth-child(2) { gap: 5px; padding: 0 4px; }
.coords { margin-left: 3px; font-size: 10px; }
.root { margin-left: auto; margin-right: 4px; }
.round { width: 32px; height: 29px; border: 1px solid #fff; border-radius: 15px; }
.round.gray { background: #6b6b6b; border-color: #6b6b6b; width: 30px; margin: 0 1px; }
.modebar .env { border-radius: 15px 0 0 15px; font-size: 11px; border-right: 0; padding: 0 2px 0 1px; gap: 1px; }

/* classic scroll bars */
.vscroll, .hscroll { display: flex; background: repeating-conic-gradient(#f0f0f0 0 25%, #fff 0 50%) 0 0 / 2px 2px; }
.vscroll { flex-direction: column; width: 17px; }
.hscroll { height: 17px; }
.sb, .thumb { background: var(--face); border: 1px solid #fff; border-right: 2px solid #777; border-bottom: 2px solid #777; flex: none; display: flex; }
.sb { width: 17px; height: 17px; }
.sb::before { content: ""; width: 0; height: 0; border: 4px solid transparent; }
.sb.up::before { border-top: 0; border-bottom-color: #000; }
.sb.down::before { border-bottom: 0; border-top-color: #000; }
.sb.left::before { border-left: 0; border-right-color: #000; }
.sb.right::before { border-right: 0; border-left-color: #000; }
.t40 { height: 40px; } .t9 { height: 9px; } .t281 { height: 281px; }
.t273 { width: 273px; } .t78 { width: 78px; } .t67 { width: 67px; }

/* workspace */
.workspace { flex: 1; display: grid; grid-template-columns: 1fr 278px; border-top: 1px solid #777; background: var(--face); }
.canvaswrap { display: grid; grid-template-columns: 1fr 17px; grid-template-rows: 1fr 17px; border-left: 2px solid #777; padding: 1px 0; background: #fff; }
.canvas { position: relative; overflow: hidden; }
.node { position: absolute; display: flex; flex-direction: column; align-items: center; gap: 2px; }
.server { left: 272px; top: 169px; }
.client { left: 435px; top: 216px; }
.link { position: absolute; left: 318px; top: 184px; }
.sim { display: flex; flex-direction: column; gap: 2px; padding-left: 6px; min-width: 0; }
.simhead { display: flex; align-items: center; gap: 11px; height: 18px; padding: 0 2px; }
.simhead h2 { margin-right: auto; }
.group { border: 1px solid #a0a0a0; border-right: 0; padding: 2px 0 2px 4px; box-shadow: inset 1px 1px #fff; }
.group h3 { height: 14px; line-height: 14px; margin-left: -1px; }
.evgroup { padding-top: 1px; }
.events { display: grid; grid-template-columns: 1fr 17px; grid-template-rows: 135px 17px; border: 1px solid #777; border-right: 0; margin-top: 1px; }
.evscroll { overflow: hidden; background: #fff; }
.evscroll table { width: 100%; table-layout: fixed; }
.evscroll th { background: var(--face); border: 1px solid #777; border-top: 0; border-left: 0; text-align: left; font-weight: normal; height: 21px; padding: 0 0 0 4px; box-shadow: inset 1px 1px #fff; }
.evscroll th:first-child { padding: 0; }
.evscroll td { height: 18px; padding: 0; }
.evscroll td:last-child { padding-left: 3px; }
.evscroll tr:nth-child(even) td { background-color: #e8e6e1; }
.evscroll .hl { background: var(--face); }
.evscroll td.c { border: solid #fff; border-width: 1px 3px; }
.evscroll tbody tr:nth-child(even) td.c { border-color: #e8e6e1; }
.evscroll tbody td.p { background: #59506f; }
.evscroll tbody td.g { background: #72b96c; }
.evscroll tbody td.r { background: #803f40; }
.w22 { width: 22px; } .w31 { width: 31px; }
.reset { display: flex; align-items: center; gap: 6px; padding-top: 3px; }
.reset label { display: flex; align-items: center; gap: 6px; }
.reset input { appearance: none; width: 12px; height: 12px; margin: 0; background: #fff; border: 1px solid #777; border-width: 2px 1px 1px 2px; display: grid; place-items: center; }
.reset input:checked::before { content: ""; width: 7px; height: 4px; border: solid #000; border-width: 0 0 2px 2px; rotate: -45deg; margin-top: -2px; }
.reset p { margin-left: auto; text-align: right; line-height: 12px; padding-right: 3px; }
.btn { background: var(--navy); color: #fff; border-radius: 4px; height: 22px; padding: 0 5px; }
.btn.tight { padding: 0 3px; }
.playrow { display: flex; gap: 4px; justify-content: center; padding: 1px 0 4px; }
.btn.sq { width: 34px; height: 30px; padding: 0; }
.slider { appearance: none; display: block; width: 100%; height: 15px; margin: 0; background: linear-gradient(#888 50%, #fff 50%) 0 6px / 100% 3px no-repeat; }
.slider::-webkit-slider-thumb { appearance: none; width: 11px; height: 15px; background: var(--face); border: 1px solid #fff; border-right-color: #666; border-bottom-color: #666; }
.filters { font-size: 10px; line-height: 12px; margin-left: -1px; padding-top: 1px; white-space: nowrap; }
.two { display: grid; grid-template-columns: 1fr 1fr; gap: 4px; padding-top: 3px; }

/* time bar */
.timebar { height: 34px; padding-left: 17px; }
.cyc { height: 28px; }
.pclabel { font-size: 10px; }
.pc { width: 36px; height: 32px; border: 1px solid #fff; border-radius: 6px; }
.timebar .small { font-size: 11px; font-weight: normal; padding: 0 4px 0 3px; border-width: 2px; gap: 2px; margin-right: 3px; }
.timebar .real { padding: 0 4px 0 2px; gap: 1px; margin-right: 2px; }
.timebar .simu { font-size: 14px; border-radius: 15px 0 0 15px; border-right: 0; padding: 0 2px; gap: 2px; }

/* bottom dock */
.bottom { display: grid; grid-template-columns: 210px 434px 18px 169px 1fr; min-height: 110px; background: #fff; }
.kinds { display: flex; flex-direction: column; justify-content: space-between; padding: 12px 0 12px 3px; }
.kindrow { display: flex; }
.kindrow button { width: 34px; height: 30px; }
.kindrow .sel { background: #9ff6fb; width: 30px; margin: 0 3px 0 2px; outline: 1px solid #175a66; outline-offset: -1px; }
.find { width: 203px; height: 19px; border: 1px solid #ddd; border-top: 2px solid #777; border-left: 2px solid #777; padding: 0 2px; }
.models { display: flex; flex-direction: column; }
.shelf { flex: 1; border-top: 1px solid #777; border-left: 2px solid #777; padding: 3px 0 2px 2px; display: flex; flex-direction: column; justify-content: space-between; min-width: 0; }
.devs { display: flex; gap: 5px; width: 426px; overflow: hidden; }
.devs button { width: 35px; height: 35px; border: 1px solid #bbb; border-radius: 4px; background: #e2e2e2; flex-direction: column; font: 8px/9px "DejaVu Sans", sans-serif; }
.models .hscroll { width: 426px; }
.picked { width: 432px; height: 20px; margin: 1px 0 0; border: 1px solid #000; text-align: center; line-height: 19px; }
.sash { justify-content: flex-start; border-left: 1px solid #777; border-right: 3px solid var(--face); margin-left: 2px; padding-left: 2px; background: repeating-conic-gradient(#f0f0f0 0 25%, #fff 0 50%) 0 0 / 2px 2px; }
.scen { padding: 10px 8px 9px 5px; display: flex; flex-direction: column; justify-content: space-between; }
.scenrow { display: flex; align-items: center; gap: 2px; }
.info { width: 34px; height: 29px; }
.combo { flex: 1; border: 1px solid #777; border-right-color: #ddd; border-bottom-color: #ddd; display: grid; }
.combo select { grid-area: 1 / 1; appearance: none; width: 100%; height: 15px; padding: 0 3px; border: 0; border-radius: 0; background: #fff; box-shadow: inset -15px 0 var(--face); }
.combo::after { content: ""; grid-area: 1 / 1; justify-self: end; align-self: center; margin-right: 4px; border: 4px solid transparent; border-top-color: #000; border-bottom: 0; pointer-events: none; }
.mid { gap: 29px; padding-left: 27px; }
.end { padding-left: 15px; }
.pdus { border-left: 1px solid #777; border-top: 2px solid #777; min-width: 0; margin: 1px 0 2px; }
.pdus table { width: 100%; table-layout: fixed; }
.pdus th { height: 21px; padding: 0 0 0 4px; text-align: left; font-weight: normal; background: var(--face); border-right: 1px solid #777; border-bottom: 1px solid #777; box-shadow: inset 1px 1px #fff; white-space: nowrap; }
.w30 { width: 30px; } .w33 { width: 33px; } .w34 { width: 34px; } .w39 { width: 39px; } .w47 { width: 47px; } .w53 { width: 53px; } .w64 { width: 64px; } .w70 { width: 70px; }

/* taskbar */
.taskbar { display: flex; height: 36px; background: linear-gradient(90deg, #d3dfe8, #e6eaee 45%, #d0dae3 70%, #d8e0e6); font: 12px/18px var(--segoe); }
.start { width: 48px; padding-top: 3px; }
.search { display: flex; align-items: center; width: 287px; background: #fff; border: 1px solid #ccc; border-bottom: 0; padding: 3px 8px 0 10px; }
.search input { flex: 1; min-width: 0; border: 0; outline: 0; padding: 0 0 0 11px; font-size: 14px; }
.search input::placeholder { color: #444; opacity: 1; }
.gift { align-self: flex-end; }
.apps { display: flex; margin-left: 2px; }
.apps button { width: 49px; padding-top: 3px; }
.apps .active { width: 43px; margin: 0 3px; background: #eef3f7; border-right: 1px solid #b9c4cc; }
.tray { display: flex; align-items: center; gap: 10px; margin-left: auto; padding: 3px 16px 0 0; }
.weather { font-size: 13px; gap: 9px; margin-right: 13px; }
.badge { align-self: flex-start; margin-top: -3px; width: 12px; height: 12px; border-radius: 6px; background: #c42b1c; color: #fff; font: 9px/12px var(--ui); }
.tray time { text-align: center; white-space: nowrap; font-size: 11px; line-height: 18px; }
.note { position: relative; width: 24px; margin-left: 4px; }
.note b { position: absolute; left: 12px; top: 6px; width: 16px; height: 16px; border: 1px solid #888; border-radius: 8px; background: #d9dfe3; font: 11px/14px var(--segoe); }

/* PDU window floats over the workspace */
.dialog { position: absolute; left: 441px; top: 64px; width: 484px; background: #fff; box-shadow: 0 3px 14px rgba(0, 0, 0, .38); padding-bottom: 11px; }
.dtitle { display: flex; align-items: center; height: 30px; padding: 0 1px 0 8px; color: #999; }
.dtitle h2 { font: 12px/16px var(--caption); margin-right: auto; }
.dtitle button { width: 19px; height: 19px; margin-top: 2px; background: #e6e6e6; color: #fff; }
.tabs { display: flex; height: 23px; background: var(--face); }
.tabs button { background: #fff; font: 11px/13px "DejaVu Sans", sans-serif; padding: 0 16px 0 12px; }
.tabs .cur { width: 150px; padding: 5px 0 0; border-bottom: 5px solid var(--navy); color: var(--navy); }
.dialog fieldset { margin: 11px 12px 0 11px; border: 1px solid #a0a0a0; padding: 13px 13px 13px 12px; min-width: 0; }
.dialog legend { padding: 0 2px; margin-left: -6px; }
.pduview { display: grid; grid-template-columns: 1fr 17px; background: var(--face); border-left: 2px solid #777; border-top: 2px solid #777; }
.fields { padding: 0 32px 10px 9px; }
.fields h3 { padding-top: 6px; line-height: 12px; text-decoration: underline; }
.cut { height: 14px; background: #fff; border: 2px solid #000; border-top: 0; }
.ruler { display: grid; grid-template-columns: repeat(32, minmax(0, 1fr)) 0; height: 13px; margin-bottom: 2px; }
.ruler i { border-left: 1px solid #5aa7ec; height: 6px; margin-top: 6px; }
.ruler b { font-weight: normal; white-space: nowrap; line-height: 12px; }
.bits { display: grid; grid-template-columns: repeat(32, minmax(0, 1fr)); grid-auto-rows: 33px; text-align: center; font-size: 10px; }
.bits > .mixed { font-size: 11px; }
.bits > div { background: #fff; border: 2px solid #000; padding-top: 4px; line-height: 12px; overflow: hidden; }
.s32 { grid-column: span 32; } .s16 { grid-column: span 16; } .s4 { grid-column: span 4; } .s3 { grid-column: span 3; }
.bits > .s1 { border-width: 2px 1px; padding: 0; }
.s1 i { display: block; height: 6px; background: var(--face); border: 1px solid #999; border-left-color: #fff; border-top-color: #fff; }
.bits > .s4 { display: flex; justify-content: space-between; padding: 4px 0 0 6px; }
.mini { display: grid; gap: 1px; margin-top: -4px; }
.mini .sb { height: 14px; }
.mini .sb::before { border-width: 0 2px 2px; }
.mini .sb.down::before { border-width: 2px 2px 0; }
```
